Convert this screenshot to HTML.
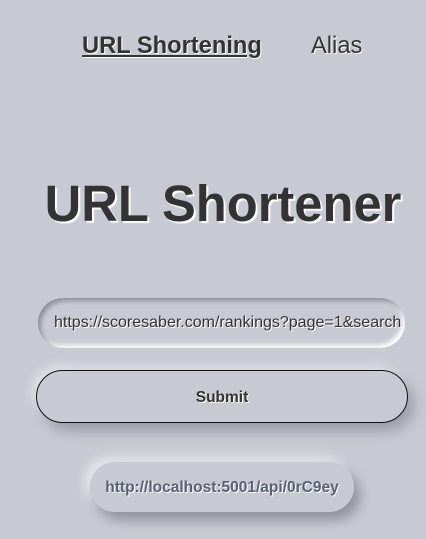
<!DOCTYPE html>
<html><head><style>
html,body{margin:0;padding:0;width:426px;height:539px;overflow:hidden;background:#c8cad3;font-family:"Liberation Sans",Arial,sans-serif;color:#333;}
.t{text-shadow:1px 1px 0 #fff;}
.nav{position:absolute;top:33px;font-size:23.7px;}
h1{position:absolute;left:0;width:446px;text-align:center;top:174px;margin:0;font-size:50.7px;font-weight:bold;color:#333;text-shadow:2px 2px 1px #fff;}
.inp{position:absolute;left:38px;top:298px;width:367px;height:50px;box-sizing:border-box;border-radius:25px;background:#c8cad3;box-shadow:inset 3px 3px 5px #8e909a,inset -3px -3px 5px #fff;font-size:16px;line-height:50px;padding-left:16px;overflow:hidden;white-space:nowrap;color:#333;}
.btn{position:absolute;left:36px;top:370px;width:372px;height:53px;box-sizing:border-box;border:1.5px solid #111;border-radius:27px;background:#c8cad3;box-shadow:6px 8px 14px #9a9ca6,-4px -4px 10px #e4e6ec;text-align:center;line-height:53px;font-size:15.5px;font-weight:bold;}
.res{position:absolute;left:90px;top:462px;width:264px;height:50px;border-radius:25px;background:#c8cad3;box-shadow:6px 8px 12px #8f919b,-5px -5px 10px #e6e8ee;text-align:center;line-height:51px;font-size:15.5px;font-weight:bold;color:#5a6076;}
</style></head><body>
<div class="nav t" style="left:82px;font-weight:bold;text-decoration:underline;">URL Shortening</div>
<div class="nav t" style="left:311px;">Alias</div>
<h1>URL Shortener</h1>
<div class="inp t">https://scoresaber.com/rankings?page=1&amp;search</div>
<div class="btn t">Submit</div>
<div class="res t">http://localhost:5001/api/0rC9ey</div>
</body></html>
